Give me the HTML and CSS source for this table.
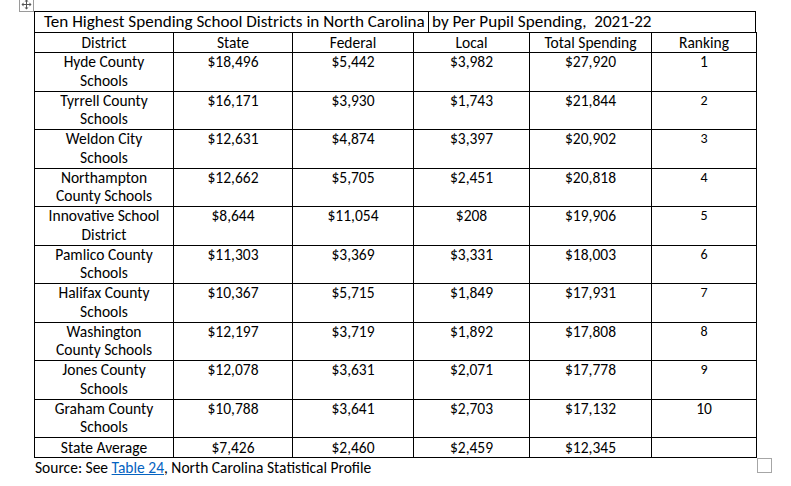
FILE: index.html
```html
<!DOCTYPE html>
<html>
<head>
<meta charset="utf-8">
<link rel="stylesheet" href="styles.css">
</head>
<body>
<div class="doc">
  <div class="move-handle">
    <svg width="13" height="11" viewBox="0 0 13 11">
      <path d="M6.5 1.5 V9.5 M2.5 5.5 H10.5" stroke="#555" stroke-width="1" fill="none"/>
      <path d="M6.5 0.5 L4.5 2.5 H8.5 Z M6.5 10.5 L4.5 8.5 H8.5 Z M1.5 5.5 L3.5 3.5 V7.5 Z M11.5 5.5 L9.5 3.5 V7.5 Z" fill="#555"/>
    </svg>
  </div>
  <div class="wrap">
    <div class="title">
      <div class="title-a">Ten Highest Spending School Districts in North Carolina</div>
      <div class="title-b">by Per Pupil Spending,&nbsp; 2021-22</div>
    </div>
    <table class="grid">
      <thead>
        <tr class="head">
          <th class="c1">District</th>
          <th class="c2">State</th>
          <th class="c3">Federal</th>
          <th class="c4">Local</th>
          <th class="c5">Total Spending</th>
          <th class="c6">Ranking</th>
        </tr>
      </thead>
      <tbody>
        <tr><td>Hyde County<br>Schools</td><td>$18,496</td><td>$5,442</td><td>$3,982</td><td>$27,920</td><td>1</td></tr>
        <tr><td>Tyrrell County<br>Schools</td><td>$16,171</td><td>$3,930</td><td>$1,743</td><td>$21,844</td><td class="small">2</td></tr>
        <tr><td>Weldon City<br>Schools</td><td>$12,631</td><td>$4,874</td><td>$3,397</td><td>$20,902</td><td class="small">3</td></tr>
        <tr><td>Northampton<br>County Schools</td><td>$12,662</td><td>$5,705</td><td>$2,451</td><td>$20,818</td><td class="small">4</td></tr>
        <tr><td>Innovative School<br>District</td><td>$8,644</td><td>$11,054</td><td>$208</td><td>$19,906</td><td class="small">5</td></tr>
        <tr><td>Pamlico County<br>Schools</td><td>$11,303</td><td>$3,369</td><td>$3,331</td><td>$18,003</td><td class="small">6</td></tr>
        <tr><td>Halifax County<br>Schools</td><td>$10,367</td><td>$5,715</td><td>$1,849</td><td>$17,931</td><td class="small">7</td></tr>
        <tr><td>Washington<br>County Schools</td><td>$12,197</td><td>$3,719</td><td>$1,892</td><td>$17,808</td><td class="small">8</td></tr>
        <tr><td>Jones County<br>Schools</td><td>$12,078</td><td>$3,631</td><td>$2,071</td><td>$17,778</td><td class="small">9</td></tr>
        <tr><td>Graham County<br>Schools</td><td>$10,788</td><td>$3,641</td><td>$2,703</td><td>$17,132</td><td>10</td></tr>
        <tr class="last"><td>State Average</td><td>$7,426</td><td>$2,460</td><td>$2,459</td><td>$12,345</td><td></td></tr>
      </tbody>
    </table>
    <div class="source-row">
      <p class="source">Source: See <a href="#" class="link">Table 24</a>, North Carolina Statistical Profile</p>
      <div class="resize-handle"></div>
    </div>
  </div>
</div>
</body>
</html>
```

FILE: styles.css
```css
html, body {
  margin: 0;
  padding: 0;
  background: #ffffff;
}

.doc {
  position: relative;
  width: 791px;
  height: 486px;
  font-family: Carlito, Lato, "Liberation Sans", sans-serif;
  color: #000;
}

.move-handle {
  position: absolute;
  left: 19px;
  top: -3px;
  width: 15px;
  height: 15px;
  border: 1px solid #9a9a9a;
  background: #fff;
  display: flex;
  align-items: flex-end;
  justify-content: center;
  box-sizing: border-box;
}

.move-handle svg {
  display: block;
  margin-bottom: 1px;
}

.wrap {
  padding-top: 11px;
  padding-left: 34px;
  width: 722px;
}

.title {
  display: flex;
  border: 1px solid #000;
  border-bottom: none;
  height: 20px;
  font-size: 17.1px;
  line-height: 20px;
}

.title-a {
  width: 393px;
  padding-left: 9px;
  box-sizing: border-box;
  white-space: nowrap;
}

.title-b {
  flex: 1;
  border-left: 1px solid #000;
  padding-left: 3px;
  white-space: nowrap;
}

.grid {
  border-collapse: separate;
  border-spacing: 0;
  table-layout: fixed;
  width: 722px;
  border-top: 1px solid #000;
  border-left: 1px solid #000;
  font-size: 15.5px;
}

.grid th,
.grid td {
  box-sizing: border-box;
  border-right: 1px solid #000;
  border-bottom: 1px solid #000;
  padding: 0;
  text-align: center;
  vertical-align: top;
  font-weight: normal;
  line-height: 18.75px;
  height: 38.5px;
}

.grid .head th {
  height: 20px;
  line-height: 19px;
}

.grid .last td {
  height: 20px;
  line-height: 19px;
}

.grid .small {
  font-size: 14px;
}

.c1 { width: 139px; }
.c2 { width: 119px; }
.c3 { width: 121px; }
.c4 { width: 116px; }
.c5 { width: 122px; }
.c6 { width: 105px; }

.source-row {
  display: flex;
  align-items: flex-start;
  justify-content: space-between;
}

.source {
  margin: 0;
  padding-left: 1px;
  font-size: 15.5px;
  line-height: 20px;
}

.link {
  color: #0563c1;
  text-decoration: underline;
}

.resize-handle {
  width: 15px;
  height: 15px;
  box-sizing: border-box;
  border: 1px solid #a6a6a6;
  margin-right: -16px;
  margin-top: 0;
}
```
